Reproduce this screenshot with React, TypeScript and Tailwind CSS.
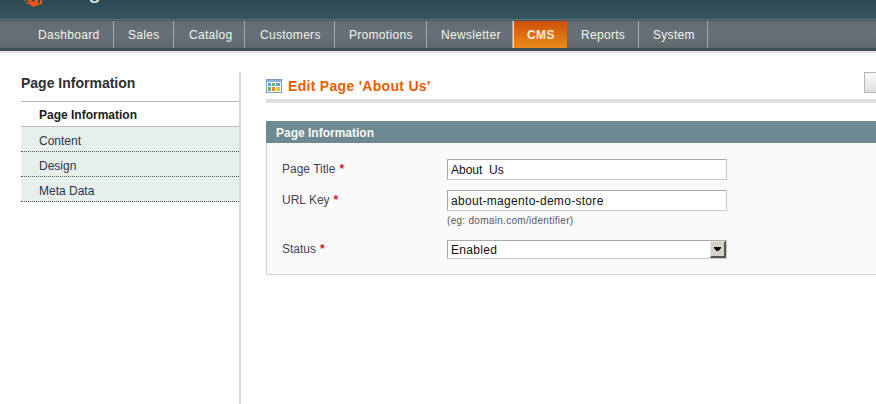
const navItems = [
  { label: 'Dashboard', width: 'w-[114px]', pad: 'pl-[38px]' },
  { label: 'Sales', width: 'w-[60px]', pad: 'pl-[14px]' },
  { label: 'Catalog', width: 'w-[71px]', pad: 'pl-[15px]' },
  { label: 'Customers', width: 'w-[90px]', pad: 'pl-[15px]' },
  { label: 'Promotions', width: 'w-[92px]', pad: 'pl-[14px]' },
  { label: 'Newsletter', width: 'w-[86px]', pad: 'pl-[14px]' },
]

const navItemsAfter = [
  { label: 'Reports', width: 'w-[72px]', pad: 'pl-[14px]' },
  { label: 'System', width: 'w-[69px]', pad: 'pl-[14px]' },
]

function NavItem({ label, width, pad }: { label: string; width: string; pad: string }) {
  return (
    <div className={`${width} ${pad} h-full shrink-0 border-r border-[#a4a9ad] pt-[2px] text-[12px] leading-[24px] tracking-[0.3px] text-[#f2f5e8]`}>
      {label}
    </div>
  )
}

function Required() {
  return <span className="ml-[4px] font-bold text-[#d9132a]">*</span>
}

function GridIcon() {
  return (
    <svg width="16" height="14" viewBox="0 0 16 14" className="shrink-0">
      <rect x="0.5" y="0.5" width="15" height="13" fill="#f4f7fb" stroke="#7d9cc4" />
      <rect x="1" y="1" width="14" height="2" fill="#8fb0d8" />
      <rect x="2" y="4" width="3" height="3" fill="#5fa0d8" />
      <rect x="6" y="4" width="3" height="3" fill="#6cb65c" />
      <rect x="10" y="4" width="4" height="3" fill="#5fa0d8" />
      <rect x="2" y="8" width="3" height="4" fill="#6cb65c" />
      <rect x="6" y="8" width="3" height="4" fill="#e0863c" />
      <rect x="10" y="8" width="4" height="4" fill="#ecc24c" />
    </svg>
  )
}

export default function App() {
  return (
    <div className="h-[404px] w-[876px] overflow-hidden bg-white font-['Liberation_Sans',Arial,sans-serif] text-[12px]">
      <div className="relative h-[19px] overflow-hidden bg-gradient-to-b from-[#2a4a55] to-[#375660]">
        <svg width="18" height="7" viewBox="0 0 18 7" className="absolute top-0 left-[24px]">
          <path d="M0 0h2v3l2 1V0h3l2 2 2-2h3v4l2-1V0h2v4l-9 3z" fill="#e8541e" />
        </svg>
        <span className="absolute -top-[20px] left-[58px] text-[22px] leading-[22px] text-[#e8eeee]">Magento</span>
        <span className="absolute -top-[10px] left-[148px] text-[13px] leading-[12px] font-bold tracking-[2px] text-[#111c20]">Admin Panel</span>
      </div>
      <div className="h-[1px] bg-[#5e7278]" />
      <div className="flex h-[28px] border-t border-[#4a5a60] bg-gradient-to-b from-[#636b72] via-[#697178] to-[#5f676d]">
        {navItems.map((item) => (
          <NavItem key={item.label} {...item} />
        ))}
        <div className="h-full w-[54px] shrink-0 border-l border-[#d8dcde] bg-gradient-to-b from-[#cf4d08] to-[#e98c1a] pl-[13px] pt-[2px] text-[12px] leading-[24px] font-bold tracking-[0.4px] text-[#f8e8dc]">
          CMS
        </div>
        {navItemsAfter.map((item) => (
          <NavItem key={item.label} {...item} />
        ))}
      </div>
      <div className="h-[3px] bg-[#3d4d53]" />
      <div className="h-[2px] bg-[#e6e6e6]" />

      <div className="flex pt-[19px]">
        <aside className="ml-[21px] h-[333px] w-[220px] shrink-0 border-r-2 border-[#d9d9d9]">
          <div className="h-[30px] border-b border-[#bbbbbb] text-[14px] leading-[22px] font-bold text-[#2f2f2f]">Page Information</div>
          <div className="h-[25px] border-b border-[#bbbbbb] pl-[18px] text-[12px] leading-[26px] font-bold text-[#1c1c1c]">Page Information</div>
          <div className="bg-[#e7efed]">
            {['Content', 'Design', 'Meta Data'].map((label) => (
              <div key={label} className="h-[25px] border-b border-dotted border-[#555555] pl-[18px] leading-[28px] text-[#2f2f4f]">
                {label}
              </div>
            ))}
          </div>
        </aside>

        <main className="ml-[25px] min-w-0 flex-1">
          <div className="flex h-[31px] items-start justify-between border-b-4 border-[#dfdfdf]">
            <div className="flex items-center gap-[6px] pt-[4px]">
              <GridIcon />
              <h1 className="text-[14px] leading-[20px] font-bold tracking-[0.3px] text-[#eb5e00]">Edit Page 'About Us'</h1>
            </div>
            <div className="h-[21px] w-[12px] border border-r-0 border-[#b5b5b5] bg-gradient-to-b from-[#fafafa] to-[#dddddd]" />
          </div>

          <div className="mt-[18px] h-[22px] bg-[#6f8992] pl-[10px] leading-[24px] font-bold text-[#f4f8f8]">Page Information</div>
          <div className="h-[132px] border-b border-l border-[#d6d6d6] bg-[#fafafa] pt-[16px] pl-[15px]">
            <div className="flex">
              <label className="w-[165px] pt-[2px] leading-[16px] text-[#444455]">
                Page Title<Required />
              </label>
              <div className="flex h-[21px] w-[280px] items-center border border-[#aaaaaa] border-r-[#c8c8c8] border-b-[#c8c8c8] bg-white pl-[3px] text-[#111111]">
                About&nbsp; Us
              </div>
            </div>
            <div className="mt-[10px] flex">
              <label className="w-[165px] pt-[2px] leading-[16px] text-[#444455]">
                URL Key<Required />
              </label>
              <div>
                <div className="flex h-[21px] w-[280px] items-center border border-[#aaaaaa] border-r-[#c8c8c8] border-b-[#c8c8c8] bg-white pl-[3px] tracking-[0.3px] text-[#111111]">
                  about-magento-demo-store
                </div>
                <p className="mt-[3px] text-[10px] leading-[14px] tracking-[0.3px] text-[#555566]">(eg: domain.com/identifier)</p>
              </div>
            </div>
            <div className="mt-[12px] flex">
              <label className="w-[165px] pt-[1px] leading-[16px] text-[#444455]">
                Status<Required />
              </label>
              <div className="flex h-[19px] w-[280px] items-center justify-between border border-[#aaaaaa] border-r-[#c8c8c8] border-b-[#c8c8c8] bg-white pl-[3px] tracking-[0.3px] text-[#111111]">
                Enabled
                <div className="flex h-[17px] w-[16px] items-center justify-center border-t border-r-2 border-b-2 border-l border-t-[#e8e6e0] border-r-[#555555] border-b-[#555555] border-l-[#e8e6e0] bg-[#d4d0c8]">
                  <svg width="7" height="4" viewBox="0 0 7 4">
                    <path d="M0 0h7v1L4.5 4h-2L0 1z" fill="#000000" />
                  </svg>
                </div>
              </div>
            </div>
          </div>
        </main>
      </div>
    </div>
  )
}
